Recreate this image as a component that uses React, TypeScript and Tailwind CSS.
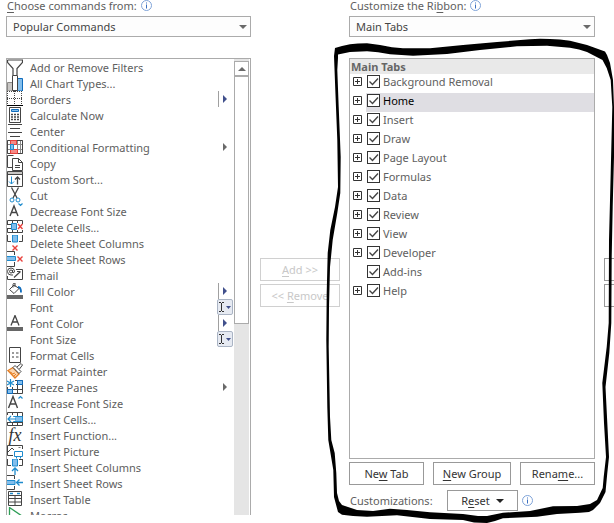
import type { ReactNode } from "react";

const DARK = "#444444";
const BLUE = "#1e8bcd";
const LIGHT = "#83beec";
const RED = "#e8413c";

function Icon({ children }: { children?: ReactNode }) {
  return (
    <svg viewBox="0 0 16 16" className="size-4 shrink-0" fill="none" stroke={DARK} aria-hidden="true">
      {children}
    </svg>
  );
}

const icons: Record<string, ReactNode> = {
  filter: <path d="M.5 1h15v2.500L10 9.500V16M.5 1v2.500L6 9.500V16" strokeWidth="1.200" />,
  chart: (
    <>
      <path d="M.5 7.500h5V16h-5z" fill="#c8c6c4" stroke="#8a8886" />
      <path d="M10.500 3.500h5V16h-5z" fill={LIGHT} stroke="#0f6cbd" />
      <path d="M5.500.5h5V15.500h-5z" fill="#fff" />
    </>
  ),
  borders: (
    <>
      <path d="M0 .5h16M0 7.500h16M.5 0v14M7.500 0v14M14.500 0v14" strokeDasharray="1 1" />
      <path d="M0 14.500h16" stroke="#000" />
    </>
  ),
  calculator: (
    <>
      <path d="M2.500.5h11v15h-11z" />
      <path d="M4.500 2.500h7v2h-7z" fill={LIGHT} stroke="#0f6cbd" />
      <path d="M4 7.500h8M4 10h8M4 12.500h8" strokeWidth="1.600" strokeDasharray="2 1" />
    </>
  ),
  center: <path d="M1 1.500h14M3 5.500h10M1 9.500h14M3 13.500h10" />,
  conditional: (
    <>
      <path d="M.5 1.500h15v13H.5zM0 5.500h16M0 10.500h16M4.500 1v14M10.500 1v14M13.500 1v14" stroke="#8a8a8a" />
      <path d="M.5 1.500h15v13H.5z" stroke={DARK} />
      <path d="M3.500 1.500h6v4h-6zM3.500 10.500h7v4h-7z" fill="#f58a86" stroke={RED} />
      <path d="M3.500 5.500h3v5h-3z" fill={LIGHT} stroke={BLUE} />
    </>
  ),
  copy: (
    <>
      <path d="M5 12.500H.5v-12h6" />
      <path d="M5.500 3.500h6l4 4v8h-10z" fill="#fff" />
      <path d="M11.500 3.500v4h4M8 10.500h5M8 12.500h5" />
    </>
  ),
  sort: (
    <>
      <path d="M.5.5h15v15H.5z" />
      <path d="M1 2h14" stroke="#c8c6c4" strokeWidth="2" />
      <path d="M0 3.500h16" />
      <path d="M4.500 5.500V13M2 10.500l2.500 2.500L7 10.500" stroke={BLUE} />
      <path d="M10.500 13.500V6M8 8.500L10.500 6 13 8.500" strokeWidth="1.300" />
    </>
  ),
  cut: (
    <>
      <path d="M4.500.5L10 11M11.500.5L6 11" strokeWidth="1.300" />
      <circle cx="5" cy="13" r="2" stroke={BLUE} />
      <circle cx="11" cy="13" r="2" stroke={BLUE} />
    </>
  ),
  decrease: (
    <>
      <path d="M3 13L7 3l4 10M4.500 9.500h5" strokeWidth="1.400" />
      <path d="M11.500.5l2 2 2-2" stroke={BLUE} strokeWidth="1.200" />
    </>
  ),
  deleteCells: (
    <>
      <path d="M.5 5V1.500h15V5M.5 10v3.500h15V11M5.500 1v3M5.500 11v3M10.500 1v3M10.500 11v3M0 5.500h4M0 9.500h4" />
      <path d="M4.500 4.500h5v6h-5z" fill={LIGHT} stroke={BLUE} />
      <path d="M11 5l4.500 5M15.500 5L11 10" stroke={RED} strokeWidth="1.400" />
    </>
  ),
  deleteColumns: (
    <>
      <path d="M.5 0v6.500H4M15.500 0v6.500H12" />
      <path d="M5.500 0h5v7h-5z" fill={LIGHT} stroke={BLUE} />
      <path d="M5.500 10.500l5 5M10.500 10.500l-5 5" stroke={RED} strokeWidth="1.400" />
    </>
  ),
  deleteRows: (
    <>
      <path d="M0 .5h7.500V4M0 15.500h7.500V11" />
      <path d="M0 5.500h8.500v4H0" fill={LIGHT} stroke={BLUE} />
      <path d="M10.500 5.500l5 5M15.500 5.500l-5 5" stroke={RED} strokeWidth="1.400" />
    </>
  ),
  email: (
    <>
      <path d="M9 2.500h6.500v10H.5V9" />
      <path d="M7 10.500L13.500 4.500M10 4.500h3.500" strokeWidth="1.200" />
      <circle cx="4" cy="4.500" r="1.500" />
      <path d="M5.500 3v2.500q2 1 2-1.500Q7 1 4 1 .5 1 .5 4.500T4 8h2" />
    </>
  ),
  fill: (
    <>
      <path d="M7 2L2.500 6.500l4.500 4 5-5zM6 4.500V1.500q0-1.500 2-1.500v4" />
      <path d="M11 4q3 0 3 5.500" stroke="#0f6cbd" strokeWidth="1.800" />
      <path d="M0 14h16" stroke="#666" strokeWidth="4" />
    </>
  ),
  fontColor: (
    <>
      <path d="M4 10.500L8 .5l4 10M5.500 7h5" strokeWidth="1.300" />
      <path d="M0 14h16" stroke="#666" strokeWidth="4" />
    </>
  ),
  formatCells: (
    <>
      <path d="M2.500.5h11v15h-11z" />
      <path d="M5.500 5.500h1v1h-1zM5.500 9.500h1v1h-1z" stroke="#777" />
      <path d="M9 6h2.500M9 10h2.500" />
    </>
  ),
  painter: (
    <>
      <path d="M1 7.500l5-3 6 6.500-4 4z" fill="#fbd6b0" stroke="#e67e22" strokeWidth="1.300" />
      <path d="M3 9l2 1M5 11l3-1M7 13l2-2" stroke="#e67e22" />
      <path d="M6 4.500l2-2 6 6-2 2zM10 4l4-3.500L15.500 2 12.500 6" fill="#fff" />
    </>
  ),
  freeze: (
    <>
      <path d="M8 1.500h7.500v13H.5V8M0 10.500h16M5.500 8v7M10.500 1v14M9 5.500h7" />
      <path d="M10.500 1.500h5v4h-5zM.5 10.500h5v4h-5z" fill={LIGHT} stroke="#0f6cbd" />
      <path d="M3.500 0v8M0 2l7 4M7 2L0 6" stroke={BLUE} strokeWidth="1.200" />
    </>
  ),
  increase: (
    <>
      <path d="M1.500 13L6 1.500 10.500 13M3 9h6" strokeWidth="1.400" />
      <path d="M11.500 3.500l2-2 2 2" stroke={BLUE} strokeWidth="1.200" />
    </>
  ),
  insertCells: (
    <>
      <path d="M.5 4V1.500h15v13H.5V12M5.500 1v3M5.500 12v3M10.500 1v14M0 11.500h16M8 5.500h8" />
      <path d="M6.500 5.500h9v5h-9z" fill={LIGHT} stroke={BLUE} />
      <path d="M0 8h8" stroke="#fff" strokeWidth="4" />
      <path d="M9 8H1M4 5L1 8l3 3" stroke={BLUE} strokeWidth="1.200" />
    </>
  ),
  picture: (
    <>
      <path d="M6 12.500H.5v-10h15V6M1 9l4-4 2 2" />
      <path d="M11.500 4.500h2" stroke="#777" />
      <path d="M7.500 8.500h8v5h-8zM9.500 13.500v2M13.500 13.500v2" fill="#fff" stroke={BLUE} />
    </>
  ),
  insertColumns: (
    <>
      <path d="M.5 0v6.500H4M15.500 0v6.500H12M12 .5h3.500" />
      <path d="M5.500 0h5v7h-5z" fill={LIGHT} stroke={BLUE} />
      <path d="M8 16V9M5 12l3-3 3 3" stroke={BLUE} strokeWidth="1.300" />
    </>
  ),
  insertRows: (
    <>
      <path d="M0 .5h7.500V4M0 14.500h7.500V11" />
      <path d="M0 5.500h8v4H0" fill={LIGHT} stroke={BLUE} />
      <path d="M16 7.500H9.500M12.500 4.500l-3 3 3 3" stroke={BLUE} strokeWidth="1.300" />
    </>
  ),
  table: (
    <>
      <path d="M1.500.5h13v14h-13zM1 4.500h14M1 7.500h14M1 11h14M8 4v11" />
      <path d="M3 2.500h3M10 2.500h3" stroke={BLUE} strokeWidth="1.500" />
    </>
  ),
  macros: <path d="M2.500.5l11 7.500-11 7.500z" stroke="#2f9e57" strokeWidth="1.300" />,
};

type Extra = "split" | "menu" | "combo";
type Command = { name: string; icon?: string; extra?: Extra };

const commands: Command[] = [
  { name: "Add or Remove Filters", icon: "filter" },
  { name: "All Chart Types...", icon: "chart" },
  { name: "Borders", icon: "borders", extra: "split" },
  { name: "Calculate Now", icon: "calculator" },
  { name: "Center", icon: "center" },
  { name: "Conditional Formatting", icon: "conditional", extra: "menu" },
  { name: "Copy", icon: "copy" },
  { name: "Custom Sort...", icon: "sort" },
  { name: "Cut", icon: "cut" },
  { name: "Decrease Font Size", icon: "decrease" },
  { name: "Delete Cells...", icon: "deleteCells" },
  { name: "Delete Sheet Columns", icon: "deleteColumns" },
  { name: "Delete Sheet Rows", icon: "deleteRows" },
  { name: "Email", icon: "email" },
  { name: "Fill Color", icon: "fill", extra: "split" },
  { name: "Font", extra: "combo" },
  { name: "Font Color", icon: "fontColor", extra: "split" },
  { name: "Font Size", extra: "combo" },
  { name: "Format Cells", icon: "formatCells" },
  { name: "Format Painter", icon: "painter" },
  { name: "Freeze Panes", icon: "freeze", extra: "menu" },
  { name: "Increase Font Size", icon: "increase" },
  { name: "Insert Cells...", icon: "insertCells" },
  { name: "Insert Function...", icon: "function" },
  { name: "Insert Picture", icon: "picture" },
  { name: "Insert Sheet Columns", icon: "insertColumns" },
  { name: "Insert Sheet Rows", icon: "insertRows" },
  { name: "Insert Table", icon: "table" },
  { name: "Macros", icon: "macros" },
];

const tabs = [
  "Background Removal",
  "Home",
  "Insert",
  "Draw",
  "Page Layout",
  "Formulas",
  "Data",
  "Review",
  "View",
  "Developer",
  "Add-ins",
  "Help",
];

function Accessory({ kind }: { kind: Extra }) {
  if (kind === "combo") {
    return (
      <span className="flex h-4 w-4 shrink-0 items-center rounded-xs border border-[#aab4c4] bg-[#e6eaf2]">
        <svg viewBox="0 0 14 14" className="size-3.5" aria-hidden="true">
          <path d="M1 2.500h2M4 2.500h2M3.500 3v8M1 11.500h2M4 11.500h2" stroke="#333" fill="none" />
          <path d="M8 6h5l-2.500 3z" fill="#41508c" />
        </svg>
      </span>
    );
  }
  const split = kind === "split";
  return (
    <span className="flex h-4 w-4 shrink-0 items-center pl-px">
      <span className={`h-4 w-px ${split ? "bg-[#a0a0a0]" : ""}`} />
      <svg viewBox="0 0 4 8" className="ml-1 h-2 w-1" aria-hidden="true">
        <path d="M0 0l4 4-4 4z" fill={split ? "#41508c" : "#6a6a6a"} />
      </svg>
    </span>
  );
}

function CommandIcon({ name }: { name?: string }) {
  if (name === "function") {
    return (
      <span className="w-4 shrink-0 text-center font-['Liberation_Serif',serif] text-[18px] leading-4 text-[#333] italic">
        fx
      </span>
    );
  }
  return <Icon>{name ? icons[name] : null}</Icon>;
}

function Info() {
  return (
    <svg viewBox="0 0 11 11" className="size-[11px] shrink-0" aria-hidden="true">
      <circle cx="5.500" cy="5.500" r="5" fill="#fff" stroke="#7fa3d8" />
      <path d="M5.500 2.500v1M5.500 4.500v4" stroke="#3a6fc0" />
    </svg>
  );
}

function Dropdown({ id, value }: { id: string; value: string }) {
  return (
    <div className="grid items-center">
      <select
        id={id}
        className="col-start-1 row-start-1 h-[21px] w-full appearance-none border border-[#ababab] bg-[#fdfdfd] pl-1.5 text-[11px] leading-4 text-[#444]"
      >
        <option>{value}</option>
      </select>
      <svg
        viewBox="0 0 8 4"
        className="pointer-events-none col-start-1 row-start-1 mr-1 h-1 w-2 justify-self-end"
        aria-hidden="true"
      >
        <path d="M0 0h8L4 4z" fill="#6a6a6a" />
      </svg>
    </div>
  );
}

function PushButton({ children, className }: { children: ReactNode; className: string }) {
  return (
    <button
      type="button"
      className={`flex items-center justify-center border bg-white text-[11px] leading-4 whitespace-nowrap ${className}`}
    >
      {children}
    </button>
  );
}

function Key({ children }: { children: string }) {
  return <span className="underline underline-offset-2">{children}</span>;
}

function TabRow({ name }: { name: string }) {
  const selected = name === "Home";
  return (
    <li className="flex h-[19px] items-center pl-[3px]">
      {name === "Add-ins" ? (
        <span className="w-[9px]" />
      ) : (
        <button type="button" aria-label={`Expand ${name}`} className="mb-1 size-[9px]">
          <svg viewBox="0 0 9 9" className="size-[9px]" fill="none" stroke="#333">
            <path d="M.5.5h8v8h-8zM2 4.500h5M4.500 2v5" />
          </svg>
        </button>
      )}
      <label
        className={`ml-1 flex h-full flex-1 items-center gap-[3px] pb-1 pl-px ${
          selected ? "bg-[#dfdee3] text-black" : "text-[#606060]"
        }`}
      >
        <span className="grid">
          <input
            type="checkbox"
            defaultChecked
            className="peer col-start-1 row-start-1 size-[13px] appearance-none border border-[#333] bg-white"
          />
          <svg
            viewBox="0 0 13 13"
            className="pointer-events-none invisible col-start-1 row-start-1 size-[13px] peer-checked:visible"
            aria-hidden="true"
          >
            <path d="M2.500 6.500l3 3 5.500-6" fill="none" stroke="#444" strokeWidth="1.400" />
          </svg>
        </span>
        {name}
      </label>
    </li>
  );
}

// Hand-drawn marker loop around the ribbon tree.
function MarkerLoop() {
  return (
    <svg
      viewBox="326 0 288 523"
      className="pointer-events-none absolute top-0 right-0 h-[523px] w-[288px]"
      aria-hidden="true"
    >
      <path
        fillRule="evenodd"
        fill="#000"
        d="M335 48L342 46 350 44.300 358 43.400 367 43.300 380 45 392 47.200 403 48.300 430 48.300 463 45 497 42 530 39.300 540 38.800 550 39 560 39.500 570 40.700 587 45 605 51.500 607 55 610 63 613 80 614 107 614 157 612.700 207 611.700 257 611.300 323 609.300 353 605.500 387 607.300 423 609 457 607.300 473 605.500 492 600 503 593 510 589 512 580 512.700 557 514 537 516.700 503 518.300 495 521 487 523 474 522.500 463 520 430 519 397 515.300 367 516.700 353 516 342 514.700 338 512 334 497 333.300 470 328.300 440 327.300 407 326.300 340 326.700 293 327.700 253 330.300 230 335 207 338 187 337.300 140 335.300 90 334 56z
        M338 54.500L338 58 337.300 70 338.700 107 340.700 157 340.300 193 337.300 213 332.700 240 330 267 329 307 328.700 347 330 417 331.300 440 334.700 453 336.300 473 337 493 339 501 342 505 357 510 373 511 390 508.700 407 510 430 512.300 463 514 478 516 487 516 503 512.700 530 511 553 506.300 577 506 590 504 597 500 602.700 488 603.700 477 606 457 604 423 602.300 383 606.700 347 608.700 323 609 240 610.700 173 612.300 107 610.700 80 606.700 68 602.500 60 587 52 579 49.500 570 47.700 547 45.700 517 46.300 480 50 447 54 413 55.700 390 54.300 378 52.300 367 51.300 350 52z"
      />
    </svg>
  );
}

export default function App() {
  return (
    <main className="relative overflow-hidden bg-white pb-2 font-['Noto_Sans','Open_Sans',sans-serif] text-[11px] leading-4 text-[#606060]">
      <div className="grid grid-cols-[245fr_80px_246fr_10px] gap-x-[9px] pl-1.5">
        <section>
          <div className="flex h-4 items-start gap-1">
            <label htmlFor="source" className="pl-px leading-3">
              <Key>C</Key>hoose commands from:
            </label>
            <Info />
          </div>
          <Dropdown id="source" value="Popular Commands" />
          <div className="mt-[21px] flex h-[457px] overflow-hidden border border-b-0 border-[#ababab]">
            <ul className="min-w-0 flex-1">
              {commands.map((c) => (
                <li key={c.name} className="flex h-4 items-center pr-px">
                  <CommandIcon name={c.icon} />
                  <span className="flex-1 pt-0.5 pl-[7px] whitespace-nowrap">{c.name}</span>
                  {c.extra && <Accessory kind={c.extra} />}
                </li>
              ))}
            </ul>
            <div className="mr-px flex w-[15px] flex-col bg-[#e5e5e5]">
              <button
                type="button"
                aria-label="Scroll up"
                className="mt-0.5 flex h-[15px] items-center justify-center border border-[#ababab] bg-white"
              >
                <svg viewBox="0 0 8 4" className="h-1 w-2">
                  <path d="M4 0l4 4H0z" fill="#6a6a6a" />
                </svg>
              </button>
              <div className="h-[248px] border border-[#ababab] bg-white" />
            </div>
          </div>
        </section>

        <div className="flex flex-col gap-[3px] pt-[258px]">
          <PushButton className="h-[23px] border-[#d0d0d0] text-[#c8c8c8]">
            <span>
              <Key>A</Key>dd &gt;&gt;
            </span>
          </PushButton>
          <PushButton className="h-[23px] border-[#d0d0d0] text-[#c8c8c8]">
            <span>
              &lt;&lt; <Key>R</Key>emove
            </span>
          </PushButton>
        </div>

        <section>
          <div className="flex h-4 items-start gap-1">
            <label htmlFor="ribbon" className="pl-px leading-3">
              Customize the Ri<Key>b</Key>bon:
            </label>
            <Info />
          </div>
          <Dropdown id="ribbon" value="Main Tabs" />
          <div className="mt-[21px] h-[401px] border border-[#ababab]">
            <h2 className="h-[15px] bg-[#e9e9e9] pl-px font-bold text-[#666]">Main Tabs</h2>
            <ul>
              {tabs.map((t) => (
                <TabRow key={t} name={t} />
              ))}
            </ul>
          </div>
          <div className="mt-[3px] flex justify-between">
            <PushButton className="h-[23px] w-[75px] border-[#999] text-[#333]">
              <span>
                Ne<Key>w</Key> Tab
              </span>
            </PushButton>
            <PushButton className="h-[23px] w-[78px] border-[#999] text-[#333]">
              <span>
                <Key>N</Key>ew Group
              </span>
            </PushButton>
            <PushButton className="h-[23px] w-[75px] border-[#999] text-[#333]">
              <span>
                Rena<Key>m</Key>e...
              </span>
            </PushButton>
          </div>
          <div className="mt-[5px] flex items-center">
            <span className="w-[98px] pl-px">Customizations:</span>
            <PushButton className="h-[21px] w-[71px] gap-1.5 border-[#999] text-[#333]">
              <span>
                R<Key>e</Key>set
              </span>
              <svg viewBox="0 0 8 4" className="h-1 w-2" aria-hidden="true">
                <path d="M0 0h8L4 4z" fill="#222" />
              </svg>
            </PushButton>
            <span className="pl-1">
              <Info />
            </span>
          </div>
        </section>

        <div className="flex flex-col gap-[3px] overflow-hidden pt-[258px]">
          <button type="button" aria-label="Move up" className="h-[23px] w-6 border border-[#999] bg-white" />
          <button type="button" aria-label="Move down" className="h-[23px] w-6 border border-[#999] bg-white" />
        </div>
      </div>
      <MarkerLoop />
    </main>
  );
}
